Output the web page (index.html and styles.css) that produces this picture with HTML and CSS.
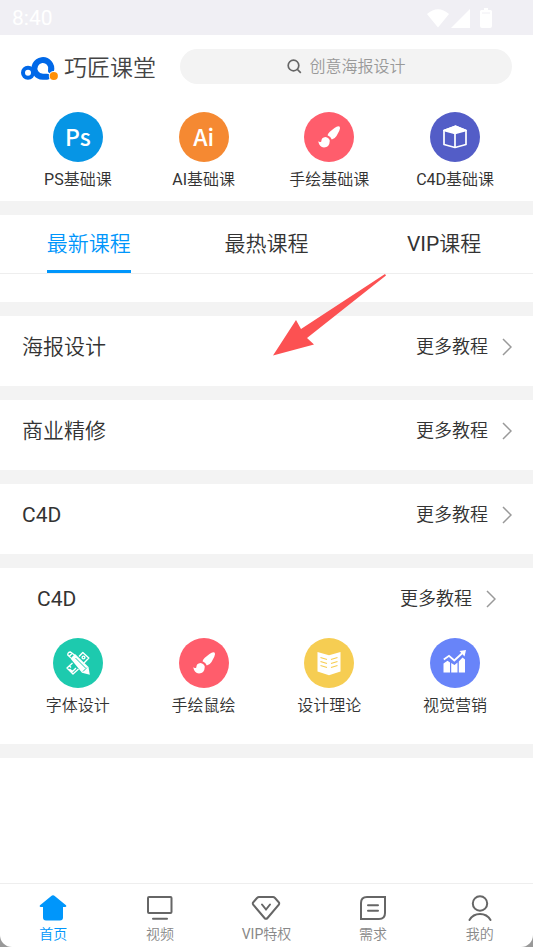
FILE: index.html
```html
<!DOCTYPE html>
<html lang="zh-CN">
<head>
<meta charset="utf-8">
<meta name="viewport" content="width=device-width, initial-scale=1">
<title>巧匠课堂</title>
<link rel="stylesheet" href="styles.css">
</head>
<body>
<div class="app">
  <div class="status">
    <span>8:40</span>
    <svg class="status-icons" width="66" height="20" viewBox="0 0 66 20" fill="#fff" aria-hidden="true">
      <path d="M0 6Q11-3.500 22 6L11 19.500Z"/>
      <path d="M24 20 43 1V20Z"/>
      <path d="M53 3.500Q53 2 54.500 2H57V0h4V2h2.500Q65 2 65 3.500V18q0 2-2 2h-8q-2 0-2-2Z"/>
      <path d="M55 5h8" stroke="#f0eff4" stroke-width="1"/>
    </svg>
  </div>

  <header class="header">
    <a class="brand" href="#">
      <svg width="38" height="25" viewBox="0 0 38 25" fill="none" aria-hidden="true">
        <path d="M30 14.500A8.400 8.400 0 1 0 14.500 16.500Q17 20.800 22 20.800H26" stroke="#0068e8" stroke-width="6" stroke-linecap="round"/>
        <circle cx="7" cy="16.700" r="5" stroke="#0068e8" stroke-width="4"/>
        <circle cx="32.800" cy="20" r="5" fill="#fff"/>
        <circle cx="32.800" cy="20" r="4.100" fill="#ff9008"/>
      </svg>
      <span>巧匠课堂</span>
    </a>
    <label class="search">
      <svg width="15" height="15" viewBox="0 0 15 15" fill="none" stroke="#666" stroke-width="1.700" aria-hidden="true">
        <circle cx="6.500" cy="6.500" r="5.300"/><path d="m10 10 3.800 3.800"/>
      </svg>
      <input type="text" placeholder="创意海报设计" aria-label="搜索">
    </label>
  </header>

  <nav class="grid">
    <a href="#"><span class="disc letters ps">Ps</span><span><span class="latin">PS</span>基础课</span></a>
    <a href="#"><span class="disc letters ai">Ai</span><span><span class="latin">AI</span>基础课</span></a>
    <a href="#"><span class="disc red">
      <svg width="26" height="26" viewBox="0 0 26 26" fill="#fff" aria-hidden="true"><path d="M23.500 2.600Q24.700 3.700 23.300 6.800L20.500 12Q18.800 14.800 15.800 15.600Q14.800 12.500 11.500 11.300Q12 9.500 13.800 7.800L18.500 4Q21.900 1.300 23.500 2.600Z"/><path d="M9.500 13Q13 13.500 13.800 16.800Q13.500 23.500 8 23.500Q3.300 23 2.200 17.300Q4 18.700 5.300 17.500Q5.300 13.300 9.500 13Z"/></svg>
    </span><span>手绘基础课</span></a>
    <a href="#"><span class="disc indigo">
      <svg width="26" height="26" viewBox="0 0 26 26" fill="none" stroke="#fff" stroke-width="1.700" stroke-linejoin="round" aria-hidden="true"><path d="M2 6.500 13.500 2.200 24 6.500V20.500L13 23.500 2 20.500Z"/><path fill="#fff" d="M2 6.500 13.500 2.200 24 6.500 13 9.500Z"/><path d="M13 9v14"/></svg>
    </span><span><span class="latin">C4D</span>基础课</span></a>
  </nav>

  <nav class="tabs">
    <a href="#"><span class="active">最新课程</span></a>
    <a href="#"><span>最热课程</span></a>
    <a href="#"><span><span class="latin">VIP</span>课程</span></a>
  </nav>

  <section class="block row">
    <h2>海报设计</h2>
    <a href="#">更多教程<svg class="chevron" viewBox="0 0 10 18"><path d="m1 1 8 8-8 8"/></svg></a>
  </section>
  <section class="block row">
    <h2>商业精修</h2>
    <a href="#">更多教程<svg class="chevron" viewBox="0 0 10 18"><path d="m1 1 8 8-8 8"/></svg></a>
  </section>
  <section class="block row">
    <h2 class="latin">C4D</h2>
    <a href="#">更多教程<svg class="chevron" viewBox="0 0 10 18"><path d="m1 1 8 8-8 8"/></svg></a>
  </section>

  <section class="block group">
    <div class="row inset">
      <h2 class="latin">C4D</h2>
      <a href="#">更多教程<svg class="chevron" viewBox="0 0 10 18"><path d="m1 1 8 8-8 8"/></svg></a>
    </div>
    <div class="grid">
      <a href="#"><span class="disc teal">
        <svg width="26" height="26" viewBox="0 0 26 26" fill="none" stroke="#fff" stroke-width="1.400" stroke-linejoin="round" aria-hidden="true">
          <path d="m14 6.500 3.800-4 6 5.500-4.800 5M7.500 13 2 18l6 6 5.500-5M4.500 16l1.500 1.500M4.500 19l3 2.500 3.500-3.500"/>
          <circle cx="18.500" cy="7.500" r="1.400"/>
          <path fill="#fff" stroke="none" d="m5.500 8.500 4.500-4.500L23.500 17l1.300 7.800-7.800-2Z"/>
          <path d="M5.800 7.800 2.800 5Q2.500 2.200 5.500 2L9.500 5M4.300 6.200 7 3.500"/>
          <path stroke="#1dcaae" stroke-width="1" d="M10.500 8 20.500 18M18 21.500l3.800-3.800"/>
        </svg>
      </span><span>字体设计</span></a>
      <a href="#"><span class="disc red">
        <svg width="26" height="26" viewBox="0 0 26 26" fill="#fff" aria-hidden="true"><path d="M23.500 2.600Q24.700 3.700 23.300 6.800L20.500 12Q18.800 14.800 15.800 15.600Q14.800 12.500 11.500 11.300Q12 9.500 13.800 7.800L18.500 4Q21.900 1.300 23.500 2.600Z"/><path d="M9.500 13Q13 13.500 13.800 16.800Q13.500 23.500 8 23.500Q3.300 23 2.200 17.300Q4 18.700 5.300 17.500Q5.300 13.300 9.500 13Z"/></svg>
      </span><span>手绘鼠绘</span></a>
      <a href="#"><span class="disc yellow">
        <svg width="26" height="26" viewBox="0 0 26 26" fill="#fff" aria-hidden="true"><path d="M1.500 2 13 5.300 24.500 2V21.500L13 25.200 1.500 21.500Z"/><path d="m4.500 7.500 6.500 2M4.500 11.500l6.500 2M4.500 15.500l6.500 2M21.500 7.500l-6.500 2M21.500 11.500l-6.500 2M21.500 15.500l-6.500 2" stroke="#f6cd52" stroke-width="1.300"/></svg>
      </span><span>设计理论</span></a>
      <a href="#"><span class="disc blue">
        <svg width="26" height="26" viewBox="0 0 26 26" fill="#fff" aria-hidden="true"><path d="M1.500 13.500 5.500 10.800 8 12.500V22.500H1.500ZM9.200 13 12.500 15 15.500 12.500V22.500H9.200ZM16.800 11.500 20.500 7.500l2.500 2V22.500h-6.200Z"/><path d="M1.800 9.500 7 5.800 12.300 10.500 21 2.500" fill="none" stroke="#fff" stroke-width="1.800"/><path d="m17.500 1 6.500-1-1.500 6.500Z"/></svg>
      </span><span>视觉营销</span></a>
    </div>
  </section>
  <div class="rest"></div>

  <nav class="bottom">
    <a class="active" href="#">
      <svg width="30" height="26" viewBox="0 0 30 26" fill="#0096fb" aria-hidden="true"><path d="M13 1.200Q15-.500 17 1.200L28 10.200Q29 12 27 12H25V22.500Q25 25.500 22 25.500H8Q5 25.500 5 22.500V12H3Q1 12 2 10.200Z"/></svg>
      <span>首页</span></a>
    <a href="#">
      <svg width="30" height="26" viewBox="0 0 30 26" aria-hidden="true"><rect x="3" y="2" width="23.500" height="16" rx="1"/><path d="M8 23.700h14" stroke-linecap="round"/></svg>
      <span>视频</span></a>
    <a href="#">
      <svg width="30" height="26" viewBox="0 0 30 26" aria-hidden="true"><path d="M8 2h14q1 0 2 1l4 4.500q.500 1-.200 2.200L16.500 23q-1.500 1.700-3 0L2.200 9.700Q1.500 8.500 2 7.500L6 3q1-1 2-1Z"/><path d="m11 9.500 4 5 4-5" stroke-linecap="round"/></svg>
      <span><span class="latin">VIP</span>特权</span></a>
    <a href="#">
      <svg width="30" height="26" viewBox="0 0 30 26" aria-hidden="true"><path d="M9 2H27V18Q27 24 21 24H3V8Q3 2 9 2ZM10 10.300h10M10 15.800h10" stroke-linecap="round"/></svg>
      <span>需求</span></a>
    <a href="#">
      <svg width="30" height="26" viewBox="0 0 30 26" aria-hidden="true"><circle cx="15" cy="8.500" r="7.200"/><path d="M4.500 25Q8 19 15 19T25.500 25" stroke-linecap="round"/></svg>
      <span>我的</span></a>
  </nav>

  <svg class="arrow" width="114" height="83" viewBox="0 0 114 83" fill="#fc5152" aria-hidden="true"><path d="M0 81.500 23 46 28 55 112 0 113 1.500 34 64 41 70.500Z"/></svg>
</div>
</body>
</html>
```
FILE: styles.css
```css
* {
  box-sizing: border-box;
}

body {
  margin: 0;
  background: #999;
  color: #333;
  font-family: Roboto, "Noto Sans CJK SC", sans-serif;
  font-size: 16px;
  font-weight: 350;
}

a {
  color: inherit;
  text-decoration: none;
}

.latin {
  font-weight: 400;
}

.app {
  position: relative;
  display: flex;
  flex-direction: column;
  min-height: 100vh;
  background: #fff;
  border-radius: 0 0 12px 12px;
}

.status {
  display: flex;
  align-items: center;
  justify-content: space-between;
  height: 35px;
  padding: 0 40px 0 12px;
  background: #f0eff4;
  color: #fff;
  font-size: 21px;
  font-weight: 400;
}

.header {
  display: flex;
  align-items: center;
  gap: 24px;
  padding: 14px 21px;
}

.brand {
  display: flex;
  align-items: center;
  gap: 5px;
  padding-top: 4px;
  color: #444;
  font-size: 23px;
  line-height: 31px;
  white-space: nowrap;
}

.search {
  display: flex;
  flex: 1;
  align-items: center;
  justify-content: center;
  gap: 8px;
  height: 35px;
  border-radius: 18px;
  background: #f3f3f3;
}

.search input {
  width: 96px;
  padding: 0;
  border: 0;
  outline: 0;
  background: transparent;
  color: #333;
  font: inherit;
  line-height: 24px;
}

.search input::placeholder {
  color: #999;
}

.grid {
  display: grid;
  grid-template-columns: repeat(4, 1fr);
  padding: 14px 15px 9px;
}

.grid a {
  display: flex;
  flex-direction: column;
  align-items: center;
  gap: 6px;
  line-height: 24px;
}

.disc {
  display: grid;
  place-items: center;
  width: 50px;
  height: 50px;
  padding-bottom: 1px;
  border-radius: 50%;
  color: #fff;
}

.letters {
  padding-bottom: 3px;
  font-family: "Noto Sans CJK SC", sans-serif;
  font-size: 23px;
  font-weight: 500;
}

.ps { background: #0695e5; }
.ai { background: #f58932; }
.red { background: #ff5d6c; }
.indigo { background: #535dc7; }
.teal { background: #1dcaae; }
.yellow { background: #f6cd52; }
.blue { background: #6884f9; }

.tabs {
  display: grid;
  grid-template-columns: repeat(3, 1fr);
  height: 101px;
  padding-bottom: 28px;
  border-top: 14px solid #f3f3f3;
  font-size: 21px;
  line-height: 58px;
}

.tabs a {
  display: flex;
  justify-content: center;
  height: 59px;
  border-bottom: 1px solid #eee;
}

.tabs .active {
  border-bottom: 3px solid #0096fb;
  color: #0096fb;
}

.block {
  border-top: 14px solid #f3f3f3;
}

.row {
  display: flex;
  justify-content: space-between;
  padding: 0 21px 8px 22px;
  line-height: 62px;
}

.row h2 {
  margin: 0;
  font-size: 21px;
}

.row h2:not(.latin) {
  font-weight: inherit;
}

.row a {
  display: flex;
  align-items: center;
  gap: 14px;
  font-size: 18px;
}

.chevron {
  width: 10px;
  height: 18px;
  fill: none;
  stroke: #999;
  stroke-width: 1.5;
}

.inset {
  padding: 0 37px;
}

.group .grid {
  padding: 8px 15px 26px;
}

.rest {
  flex: 1;
  border-top: 14px solid #f3f3f3;
}

.bottom {
  display: grid;
  grid-template-columns: repeat(5, 1fr);
  padding: 11px 0 3px;
  border-top: 1px solid #eee;
  color: #888;
  font-size: 14px;
  line-height: 20px;
}

.bottom a {
  display: flex;
  flex-direction: column;
  align-items: center;
  gap: 3px;
}

.bottom a:not(.active) svg {
  fill: none;
  stroke: #666;
  stroke-width: 2;
}

.bottom .active {
  color: #0096fb;
}

.arrow {
  position: absolute;
  top: 274px;
  left: 273px;
}
```
